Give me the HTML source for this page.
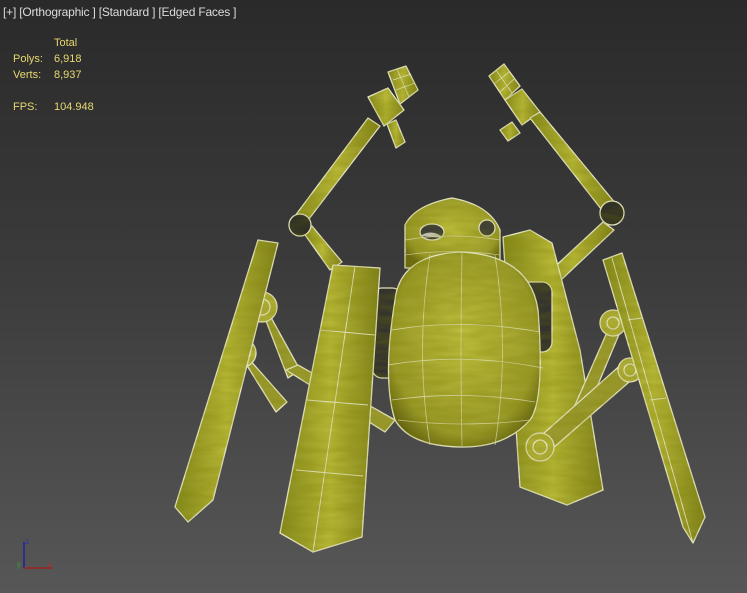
<!DOCTYPE html>
<html><head><meta charset="utf-8"><style>
html,body{margin:0;padding:0}
body{width:747px;height:593px;overflow:hidden;position:relative;background:linear-gradient(#2a2a2a 0%,#3b3b3b 45%,#575757 100%);font-family:"Liberation Sans",sans-serif}
.t{position:absolute;font-size:12px;color:#dcdcdc;left:3px;top:5px;letter-spacing:-0.2px}
.s{position:absolute;font-size:11px;color:#e6d870}
</style></head><body>
<svg width="747" height="593" style="position:absolute;left:0;top:0">
<defs>
<linearGradient id="y" x1="0" x2="1"><stop offset="0" stop-color="#858a1e"/><stop offset=".5" stop-color="#b8b838"/><stop offset="1" stop-color="#80821c"/></linearGradient>
<radialGradient id="b" cx=".5" cy=".45" r=".6"><stop offset="0" stop-color="#c0c040"/><stop offset=".8" stop-color="#9a9a2a"/><stop offset="1" stop-color="#666614"/></radialGradient>
<filter id="n" x="0" y="0" width="100%" height="100%"><feTurbulence type="fractalNoise" baseFrequency="0.03 0.15" numOctaves="2" seed="3"/><feColorMatrix values="0 0 0 0 0.2  0 0 0 0 0.2  0 0 0 0 0  0 0 0 .5 -0.1"/><feComposite in2="SourceGraphic" operator="in"/></filter>
</defs>
<g id="m" stroke="#e8e8c8" stroke-width="1.3" stroke-linejoin="round">
<!-- left arm -->
<polygon points="368,118 380,126 302,228 292,220" fill="url(#y)"/>
<polygon points="388,72 406,66 418,90 400,104" fill="url(#y)"/>
<g fill="none" stroke-width="0.8"><path d="M393,80 L411,74"/><path d="M396,90 L415,83"/><path d="M397,69 L409,97"/></g>
<polygon points="368,97 388,88 404,110 384,126" fill="url(#y)"/>
<polygon points="387,124 396,120 405,142 396,148" fill="url(#y)"/>
<polygon points="303,232 312,226 342,262 330,270" fill="url(#y)"/>
<circle cx="300" cy="225" r="11" fill="#2a2a2a"/>
<!-- right arm -->
<polygon points="489,76 504,64 520,86 505,100" fill="url(#y)"/>
<g fill="none" stroke-width="0.8"><path d="M494,84 L509,72"/><path d="M500,92 L514,79"/><path d="M496,70 L512,93"/></g>
<polygon points="505,100 522,89 540,112 522,125" fill="url(#y)"/>
<polygon points="500,130 512,122 520,133 508,141" fill="url(#y)"/>
<polygon points="530,118 540,112 616,204 605,214" fill="url(#y)"/>
<polygon points="603,222 614,230 545,295 534,286" fill="url(#y)"/>
<circle cx="612" cy="213" r="12" fill="#2a2a2a"/>
<!-- right back panel -->
<polygon points="503,237 530,230 552,243 580,350 603,490 567,505 520,487" fill="url(#y)"/>
<!-- struts -->
<polygon points="258,300 268,312 300,370 288,378" fill="#9a9a30"/>
<polygon points="236,348 248,358 287,402 276,412" fill="#9a9a30"/>
<polygon points="286,370 298,365 395,420 385,432" fill="#9a9a30"/>
<polygon points="608,330 620,332 584,418 572,412" fill="#9a9a30"/>
<polygon points="624,362 636,376 545,455 534,442" fill="#9a9a30"/>
<circle cx="262" cy="307" r="15" fill="#b0b038"/><circle cx="262" cy="307" r="8" fill="none"/>
<circle cx="242" cy="353" r="14" fill="#b0b038"/><circle cx="242" cy="353" r="7" fill="none"/>
<circle cx="613" cy="323" r="13" fill="#b0b038"/><circle cx="613" cy="323" r="6" fill="none"/>
<circle cx="630" cy="370" r="12" fill="#b0b038"/><circle cx="630" cy="370" r="6" fill="none"/>
<circle cx="540" cy="447" r="14" fill="#b0b038"/><circle cx="540" cy="447" r="7" fill="none"/>
<!-- wire side parts -->
<rect x="372" y="288" width="30" height="90" rx="10" fill="#303030"/>
<rect x="520" y="282" width="32" height="70" rx="10" fill="#303030"/>
<!-- head -->
<path d="M405,268 L405,225 Q415,205 452,198 Q490,205 500,230 L500,268 Z" fill="url(#b)"/>
<ellipse cx="432" cy="232" rx="12" ry="8" fill="#3a3a3a"/>
<ellipse cx="487" cy="228" rx="8" ry="8" fill="#3a3a3a"/>
<path d="M420,236 Q432,228 444,238" fill="#ccc" stroke="none"/>
<!-- body -->
<path d="M395,300 Q400,255 460,252 Q530,255 538,310 Q545,400 530,420 Q505,448 460,447 Q410,446 395,420 Q382,380 395,300 Z" fill="url(#b)"/>
<g fill="none" stroke-width="0.8" opacity=".8">
<path d="M392,330 Q462,318 540,332"/><path d="M388,365 Q462,352 543,368"/><path d="M392,400 Q462,390 535,402"/><path d="M398,420 Q462,428 530,420"/>
<path d="M430,255 Q415,350 430,445"/><path d="M462,252 Q460,350 462,446"/><path d="M495,255 Q510,350 495,445"/>
<path d="M405,240 Q452,232 500,240"/><path d="M405,255 Q452,248 500,255"/>
</g>
<!-- left outer panel -->
<polygon points="258,240 278,243 213,500 188,522 175,507" fill="url(#y)"/>
<!-- left front panel -->
<polygon points="333,265 380,268 362,537 313,552 280,533" fill="url(#y)"/>
<g fill="none" stroke-width="0.9"><path d="M355,266 L313,552"/><path d="M320,330 L375,335"/><path d="M307,400 L368,405"/><path d="M296,470 L363,476"/></g>
<!-- right outer panel -->
<polygon points="603,260 622,253 705,517 693,543 683,527" fill="url(#y)"/>
<g fill="none" stroke-width="0.9"><path d="M612,258 L693,543"/><path d="M628,320 L642,318"/><path d="M650,400 L666,398"/></g>
</g>
<use href="#m" filter="url(#n)"/>
</svg>
<div class="t">[+] [Orthographic ] [Standard ] [Edged Faces ]</div>
<div class="s" style="left:54px;top:37px">Total</div>
<div class="s" style="left:13px;top:53px">Polys:</div><div class="s" style="left:54px;top:53px">6,918</div>
<div class="s" style="left:13px;top:69px">Verts:</div><div class="s" style="left:54px;top:69px">8,937</div>
<div class="s" style="left:13px;top:101px">FPS:</div><div class="s" style="left:54px;top:101px">104.948</div>
<svg width="80" height="73" style="position:absolute;left:0;top:520px">
<line x1="24" y1="48" x2="24" y2="22" stroke="#2020a0" stroke-width="1.5"/>
<line x1="24" y1="48" x2="52" y2="48" stroke="#a02020" stroke-width="1.5"/>
<text x="25" y="24" font-size="8" fill="#3030b0" font-family="Liberation Sans">z</text>
<text x="17" y="47" font-size="8" fill="#30a030" font-family="Liberation Sans">y</text>
<text x="48" y="47" font-size="8" fill="#b03030" font-family="Liberation Sans">x</text>
</svg>
</body></html>
